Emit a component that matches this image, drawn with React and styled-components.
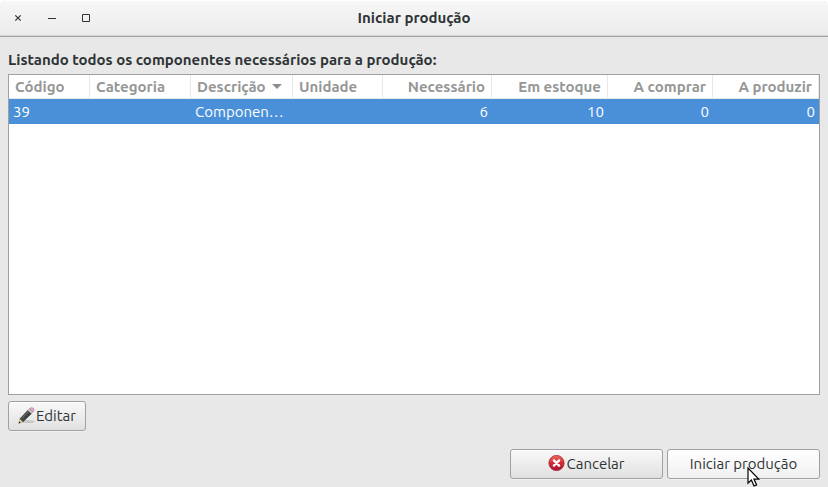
import { useState } from 'react';
import styled, { createGlobalStyle } from 'styled-components';

const columns = [
    { key: 'code', label: 'Código', width: 81 },
    { key: 'category', label: 'Categoria', width: 101 },
    { key: 'description', label: 'Descrição', width: 102, sorted: true },
    { key: 'unit', label: 'Unidade', width: 90 },
    { key: 'needed', label: 'Necessário', width: 109, numeric: true },
    { key: 'stock', label: 'Em estoque', width: 116, numeric: true },
    { key: 'toBuy', label: 'A comprar', width: 105, numeric: true },
    { key: 'toMake', label: 'A produzir', numeric: true },
];

const components = [
    {
        code: 39,
        category: '',
        description: 'Componen…',
        unit: '',
        needed: 6,
        stock: 10,
        toBuy: 0,
        toMake: 0,
    },
];

const PencilIcon = () => (
    <svg width='18' height='18' viewBox='0 0 18 18' aria-hidden='true'>
        <ellipse cx='10' cy='14.6' rx='7' ry='1.5' fill='#000' opacity='0.14' />
        <path d='M0.8 16.2 2 11.8 5.2 14.6z' fill='#ead98e' stroke='#8f8350' strokeWidth='0.4' />
        <path d='M0.6 16.6 1.2 14.4 2.8 15.8z' fill='#222' />
        <path d='M2 11.8 9.8 3.4 13.4 6.6 5.2 14.6z' fill='#3f4140' stroke='#1f2120' strokeWidth='0.6' />
        <path d='M3.6 11.8 10.4 4.6' stroke='#777b79' strokeWidth='1' />
        <path d='M9.8 3.4 11.4 1.8 14.9 5 13.4 6.6z' fill='#c9ccc6' stroke='#888a85' strokeWidth='0.4' />
        <path
            d='M11.4 1.8Q13.4 -.1 15.4 1.2 17.2 3.1 14.9 5z'
            fill='#e6a9d2'
            stroke='#a96b95'
            strokeWidth='0.6'
        />
    </svg>
);

const CancelIcon = () => (
    <svg width='18' height='18' viewBox='0 0 18 18' aria-hidden='true'>
        <defs>
            <linearGradient id='cancel-fill' x1='0' y1='0' x2='0' y2='1'>
                <stop offset='0' stopColor='#ec6a5c' />
                <stop offset='0.5' stopColor='#d22c33' />
                <stop offset='1' stopColor='#a80f3c' />
            </linearGradient>
        </defs>
        <circle cx='8.5' cy='8' r='7.6' fill='url(#cancel-fill)' stroke='#a3212c' strokeWidth='0.8' />
        <path d='M5.9 5.4 11.1 10.6M11.1 5.4 5.9 10.6' stroke='#fff' strokeWidth='2.4' strokeLinecap='round' />
    </svg>
);

const App = () => {
    const [selected, setSelected] = useState(39);

    return (
        <Window>
            <GlobalStyle />
            <TitleBar>
                <WindowControls>
                    <WindowButton type='button' aria-label='Fechar'>
                        <svg width='10' height='10' viewBox='0 0 10 10'>
                            <path d='M2.3 2.3 7.7 7.7M7.7 2.3 2.3 7.7' stroke='#2e3436' strokeWidth='1.2' />
                        </svg>
                    </WindowButton>
                    <WindowButton type='button' aria-label='Minimizar'>
                        <svg width='10' height='10' viewBox='0 0 10 10'>
                            <path d='M1 5.5h8' stroke='#2e3436' />
                        </svg>
                    </WindowButton>
                    <WindowButton type='button' aria-label='Maximizar'>
                        <svg width='10' height='10' viewBox='0 0 10 10'>
                            <path d='M1.5 1.5h7v7h-7z' fill='none' stroke='#2e3436' />
                        </svg>
                    </WindowButton>
                </WindowControls>
                <Title>Iniciar produção</Title>
            </TitleBar>
            <Content>
                <Heading id='list-heading'>
                    Listando todos os componentes necessários para a produção:
                </Heading>
                <ListFrame>
                    <Table aria-labelledby='list-heading'>
                        <colgroup>
                            {columns.map(({ key, width }) => (
                                <col key={key} width={width} />
                            ))}
                        </colgroup>
                        <thead>
                            <tr>
                                {columns.map(({ key, label, numeric, sorted }) => (
                                    <HeaderCell
                                        key={key}
                                        scope='col'
                                        $numeric={numeric}
                                        aria-sort={sorted ? 'ascending' : undefined}
                                    >
                                        {label}
                                        {sorted && <SortArrow />}
                                    </HeaderCell>
                                ))}
                            </tr>
                        </thead>
                        <tbody>
                            {components.map((item) => (
                                <Row
                                    key={item.code}
                                    $selected={item.code === selected}
                                    onClick={() => setSelected(item.code)}
                                >
                                    {columns.map(({ key, numeric }) => (
                                        <Cell key={key} $numeric={numeric}>
                                            {item[key]}
                                        </Cell>
                                    ))}
                                </Row>
                            ))}
                        </tbody>
                    </Table>
                </ListFrame>
                <Toolbar>
                    <Button type='button'>
                        <PencilIcon />
                        Editar
                    </Button>
                </Toolbar>
                <Actions>
                    <Button type='button' $wide>
                        <CancelIcon />
                        Cancelar
                    </Button>
                    <Button type='button' $wide $hovered>
                        Iniciar produção
                        <Pointer width='14' height='20' viewBox='0 0 14 20' aria-hidden='true'>
                            <path
                                d='M1 1v15.2l3.4-3.2 2.6 6 2.6-1.1-2.6-5.8h4.8z'
                                fill='#fff'
                                stroke='#000'
                                strokeWidth='1.2'
                            />
                        </Pointer>
                    </Button>
                </Actions>
            </Content>
        </Window>
    );
};

export default App;

const GlobalStyle = createGlobalStyle`
    * {
        box-sizing: border-box;
    }
    body {
        margin: 0;
        background: #fff;
        color: #2e3436;
        font-family: Ubuntu, 'Noto Sans', 'Open Sans', sans-serif;
        font-size: 15px;
        line-height: 20px;
    }
`;

const Window = styled.div`
    display: flex;
    flex-direction: column;
    min-height: 100vh;
    overflow: hidden;
    border-radius: 6px 6px 0 0;
    background: #e8e8e8;
`;

const TitleBar = styled.header`
    display: grid;
    grid-template-columns: 1fr auto 1fr;
    align-items: center;
    height: 37px;
    padding: 0 8px;
    border-bottom: 1px solid #a0a0a0;
    background: linear-gradient(#f7f7f7, #ebebeb);
    box-shadow: inset 0 1px #fff, inset 0 -1px #d6d6d6;
`;

const WindowControls = styled.div`
    display: flex;
    gap: 14px;
`;

const WindowButton = styled.button`
    display: flex;
    align-items: center;
    justify-content: center;
    width: 20px;
    height: 20px;
    padding: 0;
    border: 0;
    background: none;
`;

const Title = styled.h1`
    margin: 0;
    font-size: 15px;
    font-weight: bold;
`;

const Content = styled.main`
    display: flex;
    flex: 1;
    flex-direction: column;
    padding: 13px 8px 8px;
`;

const Heading = styled.h2`
    margin: 0 0 4px;
    font-size: 15px;
    font-weight: bold;
`;

const ListFrame = styled.div`
    flex: 1;
    border: 1px solid #a0a0a0;
    background: #fff;
`;

const Table = styled.table`
    width: 100%;
    border-spacing: 0;
    table-layout: fixed;
`;

const HeaderCell = styled.th`
    height: 24px;
    padding: 0 6px;
    border-right: 1px solid #e8e8e8;
    border-bottom: 1px solid #e8e8e8;
    color: #959796;
    text-align: ${({ $numeric }) => ($numeric ? 'right' : 'left')};
    white-space: nowrap;
`;

const SortArrow = styled.span`
    display: inline-block;
    margin-left: 6px;
    border: 5px solid transparent;
    border-top-color: #8d8f8e;
    border-bottom: 0;
    vertical-align: 3px;
`;

const Row = styled.tr`
    background: ${({ $selected }) => ($selected ? '#4a90d9' : '#fff')};
    color: ${({ $selected }) => ($selected ? '#fff' : '#2e3436')};
`;

const Cell = styled.td`
    height: 25px;
    padding: 0 4px;
    overflow: hidden;
    text-align: ${({ $numeric }) => ($numeric ? 'right' : 'left')};
    text-overflow: ellipsis;
    white-space: nowrap;
`;

const Toolbar = styled.div`
    display: flex;
    margin-top: 6px;
`;

const Actions = styled.footer`
    display: flex;
    justify-content: flex-end;
    gap: 4px;
    margin-top: 18px;
`;

const Button = styled.button`
    position: relative;
    display: flex;
    align-items: center;
    justify-content: center;
    min-width: ${({ $wide }) => ($wide ? '153px' : '78px')};
    height: 30px;
    padding: 0 8px;
    border: 1px solid #a0a0a0;
    border-radius: 3px;
    background: ${({ $hovered }) =>
        $hovered ? 'linear-gradient(#fff, #f0f0f0)' : 'linear-gradient(#f9f9f9, #e0e0e0)'};
    box-shadow: inset 0 1px #fff, 0 1px rgba(255, 255, 255, 0.4);
    color: #2e3436;
    font: inherit;
`;

/* Sits over the button and its lower edge */
const Pointer = styled.svg`
    position: absolute;
    top: 17px;
    left: 79px;
    pointer-events: none;
`;
